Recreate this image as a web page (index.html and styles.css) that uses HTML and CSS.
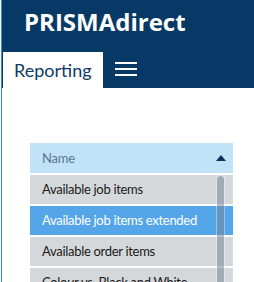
FILE: index.html
```html
<!DOCTYPE html>
<html>
<head>
<meta charset="utf-8">
<link rel="stylesheet" href="styles.css">
</head>
<body>
<div class="frame">
  <header class="header">
    <div class="brand">PRISMAdirect</div>
    <nav class="tabs">
      <div class="tab">Reporting</div>
      <div class="menu" aria-label="menu">
        <span></span><span></span><span></span>
      </div>
    </nav>
  </header>
  <main class="content">
    <div class="list">
      <div class="list-head">
        <span>Name</span>
        <svg class="sort" width="10" height="6" viewBox="0 0 10 6"><path d="M0 6 L5 0 L10 6 Z" fill="#0b2f5c"/></svg>
      </div>
      <div class="rows">
        <div class="row">Available job items</div>
        <div class="row selected">Available job items extended</div>
        <div class="row">Available order items</div>
        <div class="row">Colour vs. Black and White</div>
        <div class="scrollbar"></div>
      </div>
    </div>
  </main>
</div>
</body>
</html>
```
FILE: styles.css
```css
html, body {
  margin: 0;
  padding: 0;
  background: #ffffff;
  height: 100%;
  overflow: hidden;
}
body {
  font-family: Lato, "Open Sans", sans-serif;
}
.frame {
  margin-left: 1px;
  border-left: 1px solid #3b8bd6;
  height: 100%;
  overflow: hidden;
}
.header {
  background: #063965;
}
.brand {
  height: 52px;
  box-sizing: border-box;
  padding: 5px 0 0 22px;
  color: #ffffff;
  font-family: "Open Sans", sans-serif;
  font-weight: 700;
  font-size: 24px;
  line-height: 34px;
}
.tabs {
  display: flex;
  align-items: center;
  height: 36px;
  padding-left: 1px;
}
.tab {
  width: 100px;
  height: 36px;
  box-sizing: border-box;
  background: #ffffff;
  color: #0f3a66;
  font-size: 18px;
  line-height: 37px;
  padding-left: 11px;
}
.menu {
  margin-left: 12px;
  display: flex;
  flex-direction: column;
  gap: 4px;
  width: 22px;
  margin-top: -3px;
}
.menu span {
  display: block;
  height: 2px;
  background: #ffffff;
}
.content {
  padding: 55px 0 0 28px;
}
.list {
  width: 203px;
}
.list-head {
  display: flex;
  align-items: center;
  justify-content: space-between;
  height: 30px;
  background: #c2e2f8;
  padding: 0 7px 0 12px;
  color: #5b7594;
  font-size: 13px;
  letter-spacing: -0.2px;
}
.rows {
  position: relative;
  display: flex;
  flex-direction: column;
  gap: 2px;
  margin-top: 2px;
}
.row {
  flex: none;
  height: 29px;
  line-height: 29px;
  background: #d5d8da;
  color: #1a1a1a;
  font-size: 13px;
  letter-spacing: -0.3px;
  padding-left: 12px;
  white-space: nowrap;
  overflow: hidden;
}
.row.selected {
  background: #55a5e9;
  color: #ffffff;
}
.scrollbar {
  position: absolute;
  top: 1px;
  bottom: 0;
  left: 187px;
  width: 7px;
  border-radius: 4px 4px 0 0;
  background: rgba(120, 135, 155, 0.55);
  box-shadow: 0 0 0 1px rgba(255,255,255,0.35);
}
```
